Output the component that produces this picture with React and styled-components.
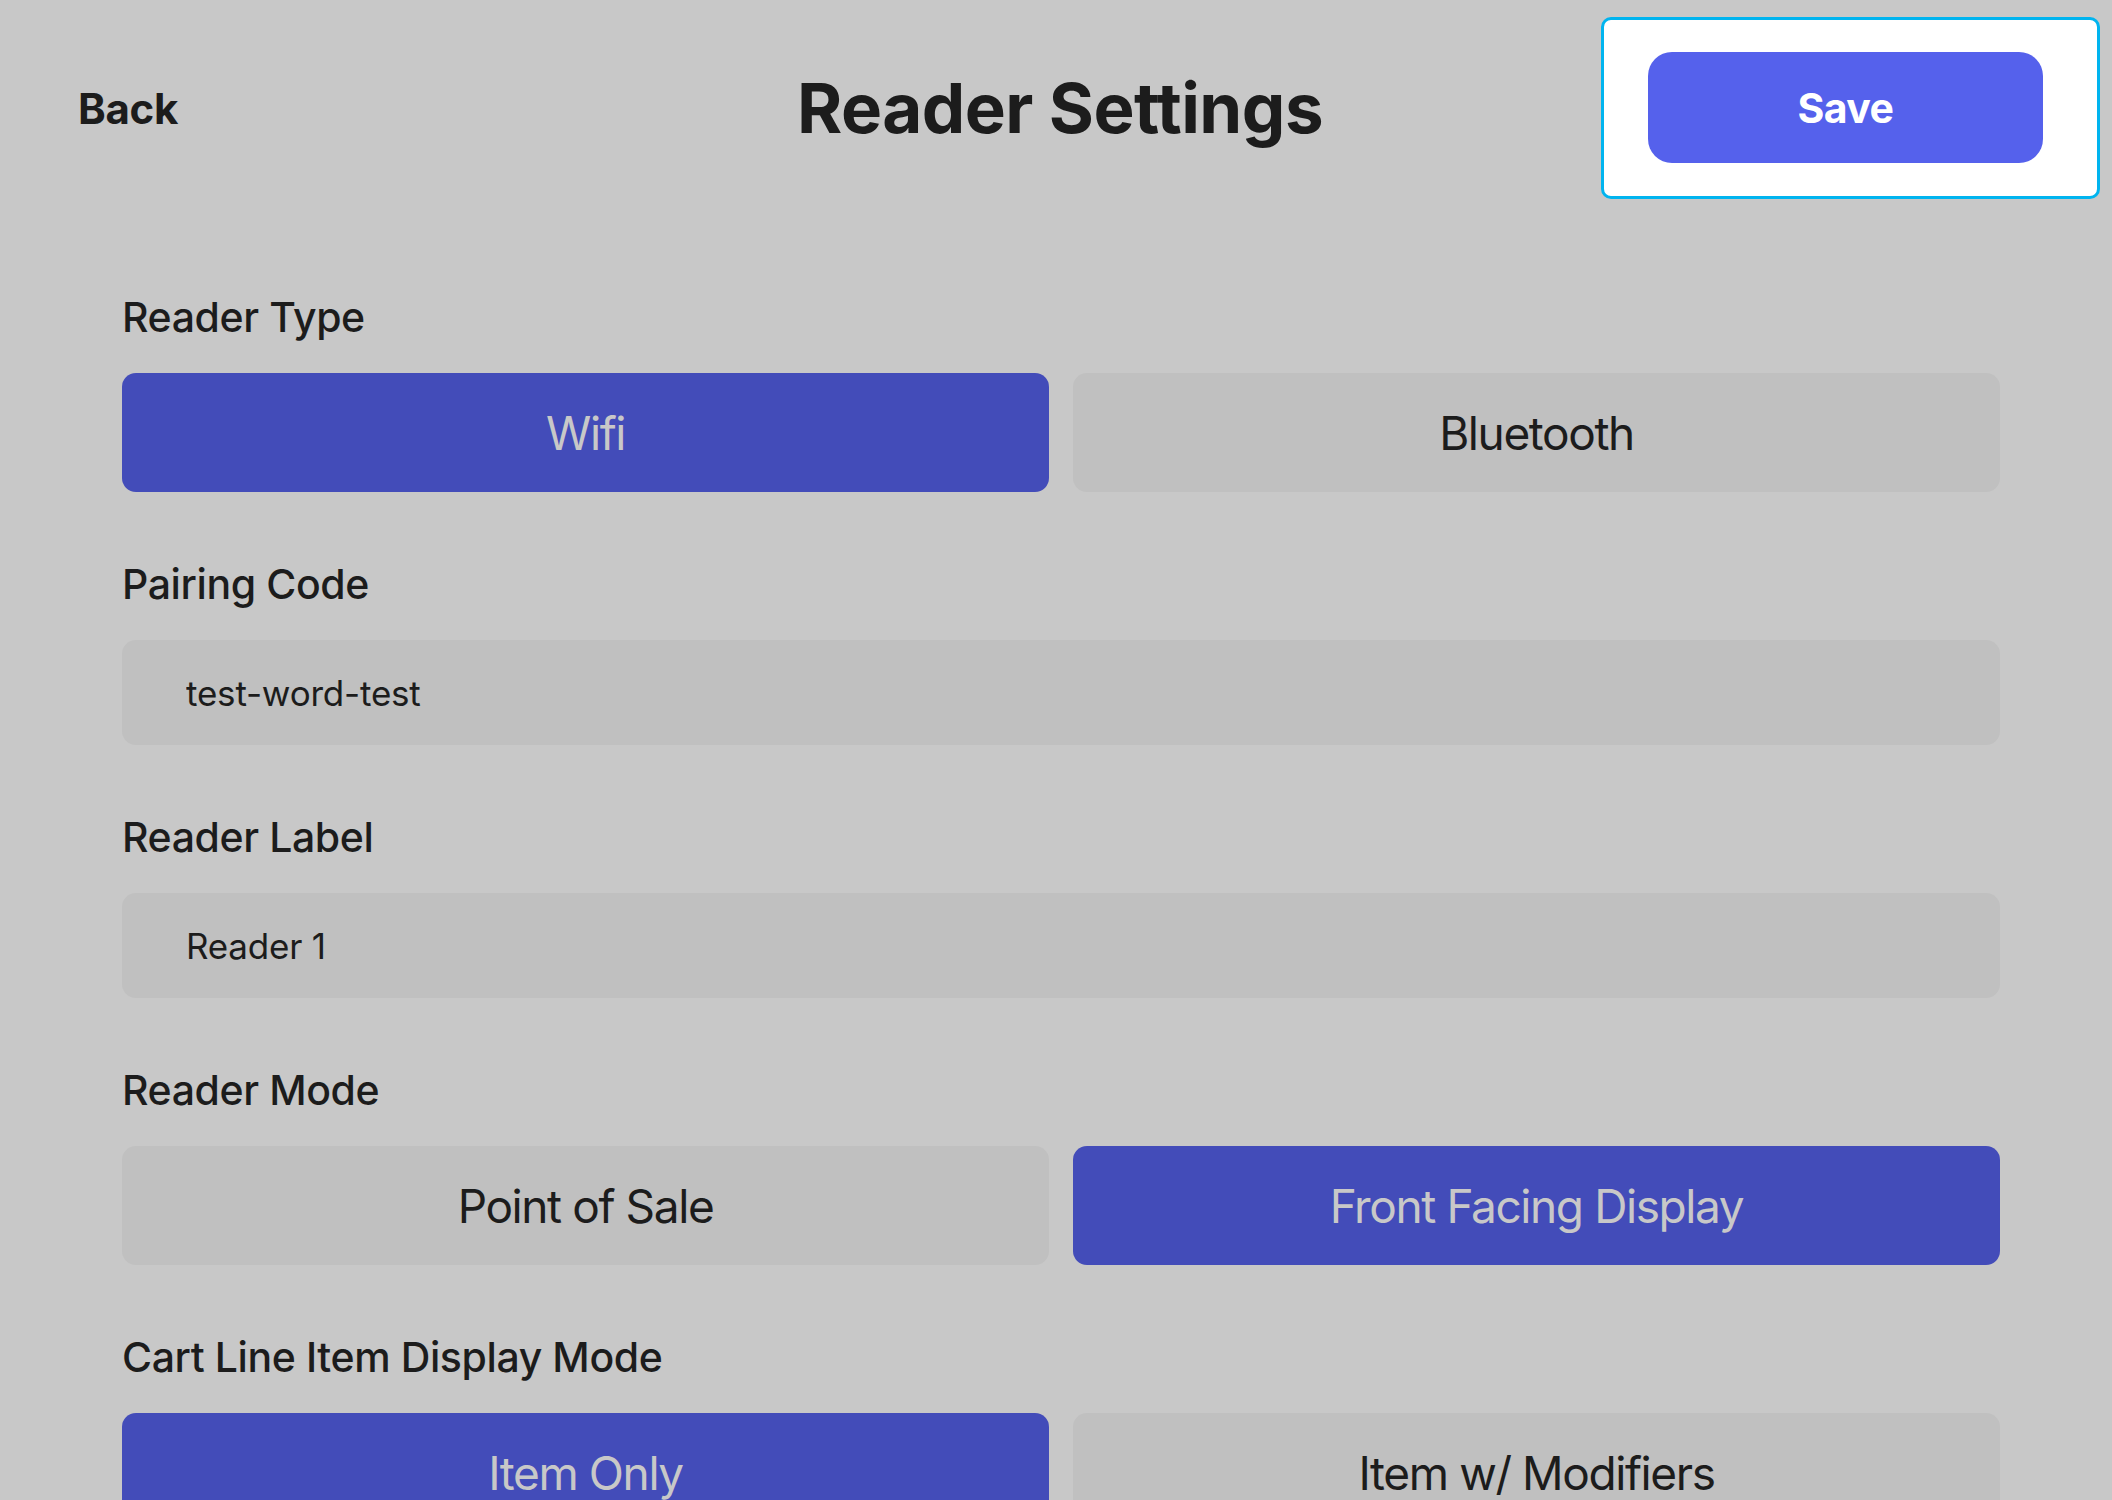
import React, { useState } from "react";
import styled, { createGlobalStyle } from "styled-components";

const GlobalStyle = createGlobalStyle`
  html, body {
    margin: 0;
    padding: 0;
    background: #c8c8c8;
  }
  body {
    font-family: Inter, "Noto Sans", "Liberation Sans", sans-serif;
    color: #1c1c1c;
  }
  * { box-sizing: border-box; }
`;

const Page = styled.div`
  min-height: 1500px;
  background: #c8c8c8;
  overflow: hidden;
`;

const Header = styled.header`
  display: grid;
  grid-template-columns: 1fr auto 1fr;
  align-items: center;
  padding: 17px 12px 0 12px;
`;

const BackButton = styled.button`
  justify-self: start;
  margin-left: 66px;
  padding: 0;
  border: none;
  background: transparent;
  font-family: inherit;
  font-size: 42px;
  font-weight: 700;
  letter-spacing: -0.3px;
  color: #1c1c1c;
  cursor: pointer;
`;

const Title = styled.h1`
  margin: 0 0 0 8px;
  font-size: 69px;
  font-weight: 700;
  letter-spacing: -0.5px;
  line-height: 1;
  color: #1c1c1c;
`;

const SaveFrame = styled.div`
  justify-self: end;
  display: flex;
  background: #ffffff;
  border: 3px solid #00b4ef;
  border-radius: 10px;
  padding: 32px 54px 33px 44px;
`;

const SaveButton = styled.button`
  width: 395px;
  height: 111px;
  border: none;
  border-radius: 24px;
  background: #5561ec;
  color: #ffffff;
  font-family: inherit;
  font-size: 41px;
  font-weight: 700;
  letter-spacing: -0.6px;
  cursor: pointer;
`;

const Form = styled.main`
  display: flex;
  flex-direction: column;
  gap: 68px;
  padding: 94px 112px 0 122px;
`;

const Field = styled.section`
  display: flex;
  flex-direction: column;
  gap: 32px;
`;

const Label = styled.label`
  font-size: 41px;
  font-weight: 500;
  line-height: 48px;
  letter-spacing: -0.4px;
  color: #1c1c1c;
`;

const Segmented = styled.div`
  display: grid;
  grid-template-columns: 1fr 1fr;
  gap: 24px;
`;

const Option = styled.button`
  height: 119px;
  border: none;
  border-radius: 14px;
  background: ${(p) => (p.$active ? "#434cb9" : "#c0c0c0")};
  color: ${(p) => (p.$active ? "#c8c8c8" : "#1c1c1c")};
  font-family: inherit;
  font-size: 46px;
  font-weight: 400;
  letter-spacing: -1.4px;
  cursor: pointer;
`;

const TextInput = styled.input`
  height: 105px;
  width: 100%;
  border: none;
  border-radius: 14px;
  background: #c0c0c0;
  padding: 0 0 0 64px;
  font-family: inherit;
  font-size: 35px;
  font-weight: 400;
  letter-spacing: -0.2px;
  color: #1c1c1c;
  outline: none;
`;

function SegmentedField({ label, options, value, onChange }) {
  return (
    <Field>
      <Label>{label}</Label>
      <Segmented>
        {options.map((o) => (
          <Option key={o} $active={o === value} onClick={() => onChange(o)}>
            {o}
          </Option>
        ))}
      </Segmented>
    </Field>
  );
}

function InputField({ label, value, onChange }) {
  return (
    <Field>
      <Label>{label}</Label>
      <TextInput value={value} onChange={(e) => onChange(e.target.value)} />
    </Field>
  );
}

export default function App() {
  const [type, setType] = useState("Wifi");
  const [code, setCode] = useState("test-word-test");
  const [name, setName] = useState("Reader 1");
  const [mode, setMode] = useState("Front Facing Display");
  const [cart, setCart] = useState("Item Only");

  return (
    <Page>
      <GlobalStyle />
      <Header>
        <BackButton>Back</BackButton>
        <Title>Reader Settings</Title>
        <SaveFrame>
          <SaveButton>Save</SaveButton>
        </SaveFrame>
      </Header>
      <Form>
        <SegmentedField
          label="Reader Type"
          options={["Wifi", "Bluetooth"]}
          value={type}
          onChange={setType}
        />
        <InputField label="Pairing Code" value={code} onChange={setCode} />
        <InputField label="Reader Label" value={name} onChange={setName} />
        <SegmentedField
          label="Reader Mode"
          options={["Point of Sale", "Front Facing Display"]}
          value={mode}
          onChange={setMode}
        />
        <SegmentedField
          label="Cart Line Item Display Mode"
          options={["Item Only", "Item w/ Modifiers"]}
          value={cart}
          onChange={setCart}
        />
      </Form>
    </Page>
  );
}
